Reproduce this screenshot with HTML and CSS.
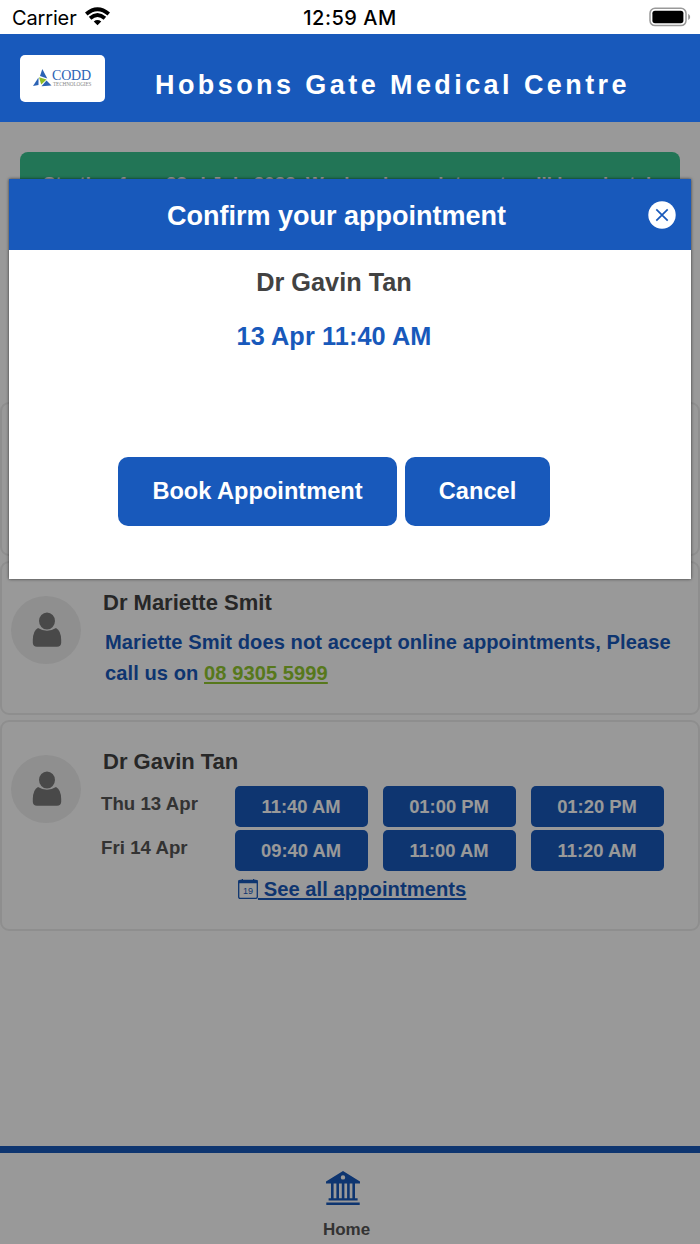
FILE: index.html
```
<!DOCTYPE html>
<html lang="en">
<head>
<meta charset="utf-8">
<title>Hobsons Gate Medical Centre</title>
<link rel="stylesheet" href="styles.css">
</head>
<body>
<div class="app">
  <div class="status">
    <div class="carrier"><span>Carrier</span>
      <svg class="wifi" width="25" height="19" viewBox="0 0 26 19"><g fill="none" stroke="#000" stroke-width="4"><path d="M1.3 6.9Q13-3 24.7 6.9"/><path d="M5.3 11.3Q13 4.7 20.7 11.3"/></g><path d="M9.1 14.6Q13 11.6 16.9 14.6L13 18.7Z"/></svg>
    </div>
    <div class="clock">12:59 AM</div>
    <svg class="battery" width="42" height="20" viewBox="0 0 42 20"><rect x="1" y="1.2" width="36" height="17.4" rx="5" fill="none" stroke="#999" stroke-width="1.5"/><rect x="3.4" y="3.7" width="31" height="12.5" rx="2.6"/><path d="M39.2 6.8Q41.2 8 41.2 9.9T39.2 13Z" fill="#999"/></svg>
  </div>
  <header class="header">
    <div class="logo">
      <svg class="mark" width="19" height="18" viewBox="0 0 19 18"><path d="M9.3 0L14.3 9.5L7 7Z" fill="#2b62b4"/><path d="M5.5 8.5V16L0 17Z" fill="#2b62b4"/><path d="M13.5 11.5L18.5 16.5L8.5 17.2Z" fill="#2b62b4"/><path d="M6 8.2L13.5 10.5L8.2 15.5Z" fill="#90bd26"/></svg>
      <div class="logo-text"><span class="codd">CODD</span><span class="tech">TECHNOLOGIES</span></div>
    </div>
    <h1>Hobsons Gate Medical Centre</h1>
  </header>
  <main class="content">
    <div class="notice">Starting from 23rd July 2022, Weekend appointments will be privately</div>
    <section class="card empty"></section>
    <section class="card mariette">
      <div class="avatar"><svg width="30" height="36" viewBox="0 0 30 36"><ellipse cx="15" cy="9" rx="8" ry="8.6"/><path d="M6 16Q15 21.5 24 16Q29 18.5 29.2 28V31Q29 34.6 25 34.8H5Q1 34.6.8 31V28Q1 18.5 6 16Z"/></svg></div>
      <div class="body">
        <h2>Dr Mariette Smit</h2>
        <p class="message">Mariette Smit does not accept online appointments, Please<br>call us on <a class="phone">08 9305 5999</a></p>
      </div>
    </section>
    <section class="card gavin">
      <div class="avatar"><svg width="30" height="36" viewBox="0 0 30 36"><ellipse cx="15" cy="9" rx="8" ry="8.6"/><path d="M6 16Q15 21.5 24 16Q29 18.5 29.2 28V31Q29 34.6 25 34.8H5Q1 34.6.8 31V28Q1 18.5 6 16Z"/></svg></div>
      <div class="body">
        <h2>Dr Gavin Tan</h2>
        <div class="slots">
          <span class="date">Thu 13 Apr</span><a class="slot">11:40 AM</a><a class="slot">01:00 PM</a><a class="slot">01:20 PM</a>
          <span class="date">Fri 14 Apr</span><a class="slot">09:40 AM</a><a class="slot">11:00 AM</a><a class="slot">11:20 AM</a>
        </div>
        <div class="see-all"><svg width="20" height="20" viewBox="0 0 20 20"><rect x=".7" y="1.5" width="18.6" height="17.8" rx="1.3" fill="none" stroke="currentColor" stroke-width="1.3"/><path d="M.5 1H19.5V4.2H.5ZM3.7 0H5V2H3.7ZM15 0H16.3V2H15Z" fill="currentColor"/><text class="cal-day" x="10" y="14.6" text-anchor="middle">19</text></svg><a>&nbsp;See all appointments</a></div>
      </div>
    </section>
  </main>
  <nav class="tabs">
    <svg width="34" height="34" viewBox="0 0 34 34"><path fill-rule="evenodd" d="M17 0L34 10.5V12.5H0V10.5ZM17 4.2A2.2 2.2 0 1 0 17 8.6A2.2 2.2 0 1 0 17 4.2Z"/><path d="M5 12H7.6V28H5ZM10.4 12H13V28H10.4ZM15.8 12H18.4V28H15.8ZM21.1 12H23.7V28H21.1ZM26.4 12H29V28H26.4ZM2.6 27.3H31.6V29.6H2.6ZM.3 31.6H33.7V34H.3Z"/></svg>
    <span>Home</span>
  </nav>
  <div class="overlay"></div>
  <div class="modal">
    <div class="modal-head"><h3>Confirm your appointment</h3>
      <svg class="close" width="28" height="28" viewBox="0 0 28 28"><circle cx="14" cy="14" r="13.7" fill="#fff"/><path d="M8.3 8.3L19.7 19.7M19.7 8.3L8.3 19.7" stroke="#1859bb" stroke-width="1.7"/></svg>
    </div>
    <div class="modal-body">
      <div class="doctor">Dr Gavin Tan</div>
      <div class="time">13 Apr 11:40 AM</div>
      <div class="actions"><button class="book">Book Appointment</button><button class="cancel">Cancel</button></div>
    </div>
  </div>
</div>
</body>
</html>
```

FILE: styles.css
```
* { box-sizing: border-box; }
body { margin: 0; font-family: "Liberation Sans", Arial, sans-serif; font-weight: 700; color: #424242; }
h1, h2, h3, p { margin: 0; }
.app { position: relative; width: 700px; height: 1244px; overflow: hidden; display: flex; flex-direction: column; background: #fff; }
.status { height: 34px; flex: none; display: grid; grid-template-columns: 1fr auto 1fr; align-items: center; padding: 0 9px 0 12px; font-family: Inter, sans-serif; color: #000; font-weight: 400; font-size: 20px; }
.carrier { display: flex; align-items: center; gap: 8px; padding-top: 2px; letter-spacing: -.15px; }
.wifi { margin-top: -3px; }
.clock { font-weight: 500; padding: 2px 3px 0 0; letter-spacing: .5px; }
.battery { justify-self: end; }
.header { height: 88px; flex: none; display: flex; align-items: center; background: #1859bb; padding-left: 20px; }
.logo { width: 85px; height: 47px; border-radius: 5px; background: #fff; display: flex; align-items: center; padding-left: 13px; gap: 0; }
.logo-text { display: flex; flex-direction: column; font-family: "Liberation Serif", serif; font-weight: 400; }
.codd { font-size: 14px; line-height: 11px; color: #2b62b4; letter-spacing: -.2px; }
.tech { font-size: 5.2px; line-height: 6px; color: #888; letter-spacing: -.1px; margin-left: 1px; }
h1 { color: #fff; font-size: 27px; line-height: 32px; letter-spacing: 3.42px; margin: 13px 0 0 50px; }
.content { flex: 1; display: flex; flex-direction: column; padding-top: 30px; }
.notice { height: 160px; flex: none; margin: 0 20px 90px; padding: 20px 23px; background: #39c38f; border-radius: 8px; color: #fff; font-size: 18.8px; line-height: 24px; white-space: nowrap; }
.card { border: 2px solid #ededed; border-radius: 9px; display: flex; margin-bottom: 5px; flex: none; }
.empty { height: 154px; }
.mariette { height: 154px; padding-top: 33px; }
.gavin { height: 211px; padding-top: 33px; }
.avatar { width: 70px; height: 68px; margin-left: 9px; border-radius: 50%; background: #efefef; display: flex; align-items: center; justify-content: center; padding-left: 1px; fill: #7a7a7a; }
.body { margin-left: 22px; }
h2 { font-size: 22px; line-height: 26px; margin-top: -6px; }
.message { color: #1859bb; font-size: 20.1px; letter-spacing: .07px; line-height: 30.5px; margin: 11px 0 0 2px; white-space: nowrap; }
.phone { color: #91c92f; text-decoration: underline; text-underline-offset: 2px; text-decoration-thickness: 2px; }
.slots { display: grid; grid-template-columns: 118.5px 133px 133px 133px; grid-auto-rows: 41px; gap: 3px 15px; margin: 11px 0 0 -2px; font-size: 18.4px; }
.date { padding-top: 7px; font-size: 18.6px; line-height: 21px; letter-spacing: .05px; color: #555; }
.slot { background: #1859bb; color: #fff; border-radius: 5px; display: flex; align-items: center; justify-content: center; }
.see-all { display: flex; align-items: center; margin: 6px 0 0 135px; font-size: 20.2px; line-height: 24px; letter-spacing: .04px; color: #1859bb; }
.see-all a { text-decoration: underline; text-underline-offset: 2px; text-decoration-thickness: 1.5px; }
.cal-day { font-size: 9px; font-weight: 400; fill: currentColor; }
.tabs { height: 98px; flex: none; border-top: 7px solid #1859bb; display: flex; flex-direction: column; align-items: center; padding: 18px 14px 0 0; fill: #1859bb; }
.tabs span { font-size: 17px; line-height: 20px; margin: 15px 0 0 7px; color: #555; }
.overlay { position: absolute; inset: 122px 0 0; background: rgba(0,0,0,.4); }
.modal { position: absolute; left: 9px; top: 179px; width: 682px; height: 400px; background: #fff; box-shadow: 0 0 3px rgba(0,0,0,.65); }
.modal-head { height: 71px; background: #1859bb; display: flex; align-items: center; justify-content: space-between; padding: 0 15px 0 158px; }
h3 { color: #fff; font-size: 27px; line-height: 32px; margin-top: 2px; }
.modal-body { display: flex; flex-direction: column; align-items: center; padding: 16px 32px 0 0; font-size: 25.3px; line-height: 32px; }
.time { margin-top: 22px; color: #1859bb; letter-spacing: .1px; }
.actions { display: flex; gap: 8px; margin-top: 104.5px; }
button { height: 69px; border: 0; border-radius: 10px; padding: 0; background: #1859bb; color: #fff; font: 700 23.6px "Liberation Sans", Arial, sans-serif; }
.book { width: 279px; }
.cancel { width: 145px; }
```
